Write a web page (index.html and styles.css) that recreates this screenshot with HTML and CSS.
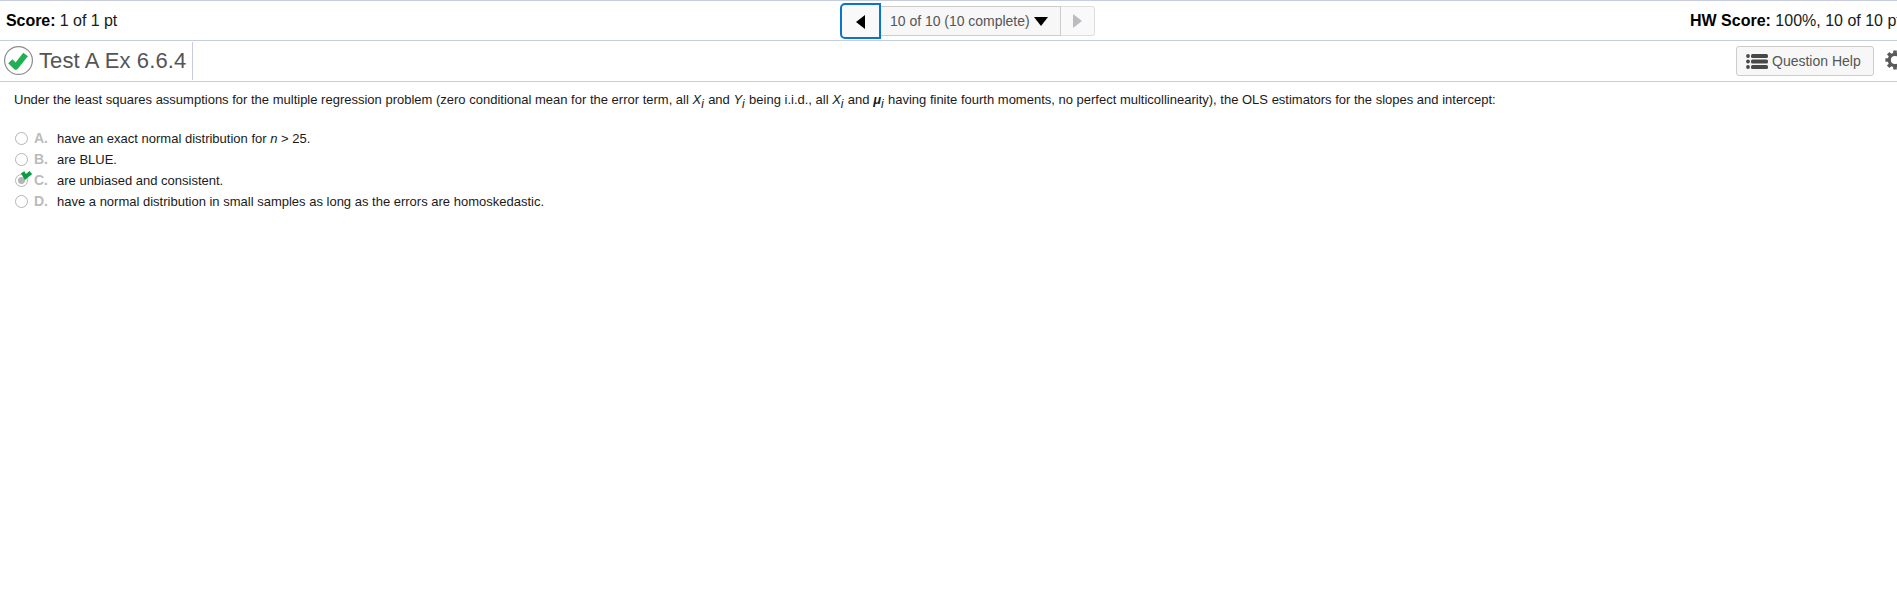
FILE: index.html
```html
<!DOCTYPE html>
<html lang="en">
<head>
<meta charset="utf-8">
<title>Test A Ex 6.6.4</title>
<link rel="stylesheet" href="styles.css">
</head>
<body>
<header class="score-bar">
  <div class="score"><b>Score:</b> <span>1 of 1 pt</span></div>
  <nav class="pager">
    <button class="prev" aria-label="Previous"><svg width="9" height="14" viewBox="0 0 9 14"><path d="M9 0V14L0 7Z" fill="#000"/></svg></button>
    <button class="pick"><span class="pick-text">10 of 10 (10 complete)</span><svg width="14" height="9" viewBox="0 0 14 9"><path d="M0 0H14L7 9Z" fill="#000"/></svg></button>
    <button class="next" aria-label="Next"><svg width="9" height="14" viewBox="0 0 9 14"><path d="M0 0V14L9 7Z" fill="#bcbcc0"/></svg></button>
  </nav>
  <div class="hw"><b>HW Score:</b> <span>100%, 10 of 10 pts</span></div>
</header>
<div class="title-bar">
  <div class="title">
    <svg class="status" width="30" height="30" viewBox="0 0 30 30"><circle cx="15.5" cy="15.5" r="13.9" fill="#fff" stroke="#8c8c8c" stroke-width="1.2"/><path d="M7.3 16.3L12.8 21.8L22.6 9.5" fill="none" stroke="#1fb151" stroke-width="5.8" stroke-linejoin="round"/></svg>
    <h1>Test A Ex 6.6.4</h1>
  </div>
  <div class="tools">
    <button class="help"><svg width="22" height="15" viewBox="0 0 22 15" fill="#484848"><circle cx="2" cy="2" r="1.9"/><circle cx="2" cy="7.5" r="1.9"/><circle cx="2" cy="13" r="1.9"/><rect x="5" y="0" width="17" height="4" rx="1.5"/><rect x="5" y="5.5" width="17" height="4" rx="1.5"/><rect x="5" y="11" width="17" height="4" rx="1.5"/></svg><span class="help-text">Question Help</span></button>
    <svg class="gear" width="20" height="20" viewBox="0 0 20 20"><circle cx="10" cy="10" r="5.7" fill="none" stroke="#5a5a5a" stroke-width="3.2"/><path d="M10 0.4V4M10 16V19.6M0.4 10H4M16 10H19.6M3.2 3.2L5.8 5.8M14.2 14.2L16.8 16.8M3.2 16.8L5.8 14.2M14.2 5.8L16.8 3.2" stroke="#5a5a5a" stroke-width="3.6"/></svg>
  </div>
</div>
<main>
  <p class="question">Under the least squares assumptions for the multiple regression problem (zero conditional mean for the error term, all <i>X<sub>i</sub></i> and <i>Y<sub>i</sub></i> being i.i.d., all <i>X<sub>i</sub></i> and <i><b>μ</b><sub>i</sub></i> having finite fourth moments, no perfect multicollinearity), the OLS estimators for the slopes and intercept:</p>
  <ul class="choices">
    <li><span class="radio"></span><b>A.</b><span>have an exact normal distribution for <i>n</i> &gt; 25.</span></li>
    <li><span class="radio"></span><b>B.</b><span>are BLUE.</span></li>
    <li><span class="radio chosen"><svg class="tick" width="11" height="10" viewBox="0 0 11 10"><path d="M1.6 1.4L4.4 6L9.8 1.6" fill="none" stroke="#0a9c41" stroke-width="4"/></svg></span><b>C.</b><span>are unbiased and consistent.</span></li>
    <li><span class="radio"></span><b>D.</b><span>have a normal distribution in small samples as long as the errors are homoskedastic.</span></li>
  </ul>
</main>
</body>
</html>
```

FILE: styles.css
```css
* { box-sizing: border-box; }
body { margin: 0; overflow: hidden; background: #fff; color: #1a1a1a; font-family: "Liberation Sans", Arial, sans-serif; }
button { font: inherit; padding: 0; margin: 0; display: flex; align-items: center; text-align: left; }
.score-bar { height: 41px; border-top: 1px solid #c8cce0; border-bottom: 1px solid #c8cce0; display: grid; grid-template-columns: 840px 1fr 207px; font-size: 16px; line-height: 18px; white-space: nowrap; }
.score-bar b { color: #000; }
.score { padding: 11px 0 0 6px; letter-spacing: -0.06px; }
.hw { padding-top: 11px; }
.pager { display: flex; align-items: flex-start; padding-top: 2px; }
.prev { width: 41px; height: 36px; border: 2px solid #0b76c9; border-radius: 5px 0 0 5px; background: #f9f9f9; padding: 2px 0 0 14px; }
.pick { width: 180px; height: 30px; margin-top: 3px; border: 1px solid #ccc; border-left: 0; background: #f7f7f7; color: #555; padding-left: 9px; font-size: 14px; letter-spacing: -0.02px; }
.pick-text { width: 144px; padding-bottom: 1px; }
.next { width: 34px; height: 30px; margin-top: 3px; border: 1px solid #dedede; border-left: 0; border-radius: 0 3px 3px 0; background: #f9f9f9; padding-left: 12px; }
.title-bar { height: 41px; border-bottom: 1px solid #c8cce0; display: flex; justify-content: space-between; }
.title { width: 193px; height: 38px; margin-top: 1px; border-right: 1px solid #c8cce0; display: flex; padding: 3px 0 0 3px; }
h1 { margin: 1px 0 0 6px; font-weight: 400; font-size: 22px; letter-spacing: 0.12px; line-height: 30px; color: #555; white-space: nowrap; }
.tools { display: flex; width: 161px; padding-top: 5px; }
.help { width: 138px; height: 30px; flex: none; border: 1px solid #ccc; border-radius: 3px; background: #f7f7f7; color: #555; font-size: 14px; padding: 1px 0 0 9px; gap: 4px; white-space: nowrap; }
.help-text { padding-bottom: 2px; }
.gear { flex: none; margin: 4px 0 0 11px; }
main { padding: 9px 0 0 14px; font-size: 13px; }
.question { margin: 0; line-height: 18px; white-space: nowrap; }
sub { font-size: 12px; line-height: 0; vertical-align: -4px; padding-right: 0.7px; }
.choices { list-style: none; margin: 19px 0 0; padding: 0; }
.choices li { display: flex; height: 21px; line-height: 21px; white-space: nowrap; }
.choices b { color: #bbb; width: 23px; font-size: 14px; }
.radio { position: relative; width: 13px; height: 13px; border: 1px solid #b5b5b5; border-radius: 50%; margin: 4px 6px 0 1px; }
.chosen { background: radial-gradient(circle, #b5b5b5 0 3px, #fff 4px); }
.tick { position: absolute; left: 5px; top: -4px; }
```
